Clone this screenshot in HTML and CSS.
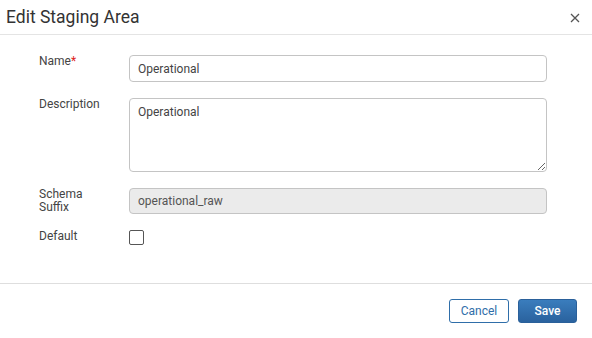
FILE: index.html
```html
<!DOCTYPE html>
<html lang="en">
<head>
  <meta charset="UTF-8">
  <title>Edit Staging Area</title>
  <link rel="stylesheet" href="styles.css">
</head>
<body>
  <div class="modal">
    <header class="modal-header">
      <h2>Edit Staging Area</h2>
      <button class="close" type="button" aria-label="Close">
        <svg width="10" height="10" viewBox="0 0 10 10"><path d="M1 1L9 9M9 1L1 9" stroke="#555" stroke-width="1.3"/></svg>
      </button>
    </header>
    <form class="modal-body">
      <label class="lbl">Name<span class="req">*</span></label>
      <input type="text" class="field" value="Operational">

      <label class="lbl">Description</label>
      <textarea class="field area">Operational</textarea>

      <label class="lbl">Schema<br>Suffix</label>
      <input type="text" class="field disabled" value="operational_raw" disabled>

      <label class="lbl">Default</label>
      <div class="check-wrap"><input type="checkbox" class="check"></div>
    </form>
    <footer class="modal-footer">
      <button type="button" class="btn cancel">Cancel</button>
      <button type="button" class="btn save">Save</button>
    </footer>
  </div>
</body>
</html>
```

FILE: styles.css
```css
body {
  margin: 0;
  font-family: Roboto, "Liberation Sans", sans-serif;
  background: #fff;
  color: #333;
  width: 592px;
  height: 338px;
  overflow: hidden;
}
.modal-header {
  height: 34px;
  border-bottom: 1px solid #e4e4e4;
  display: flex;
  align-items: center;
  justify-content: space-between;
  padding: 0 12px 0 6px;
}
.modal-header h2 {
  margin: 0;
  font-size: 17.5px;
  font-weight: 400;
  color: #333;
}
.close {
  border: none;
  background: none;
  padding: 0;
  display: flex;
  margin-top: 2px;
}
.modal-body {
  display: grid;
  grid-template-columns: 90px 418px;
  row-gap: 16px;
  padding: 20px 0 38px 39px;
  border-bottom: 1px solid #dedede;
}
.lbl {
  font-size: 12px;
  color: #444;
  line-height: 13px;
}
.req {
  color: #d22;
}
.field {
  display: block;
  box-sizing: border-box;
  width: 418px;
  height: 27px;
  margin: 0;
  border: 1px solid #c4c4c4;
  border-radius: 4px;
  padding: 0 8px;
  font-family: inherit;
  font-size: 12px;
  color: #444;
  background: #fff;
}
.area {
  height: 74px;
  padding-top: 6px;
  resize: vertical;
}
.disabled {
  height: 26px;
  background: #ebebeb;
  color: #555;
}
.check-wrap {
  display: flex;
}
.check {
  appearance: none;
  margin: 0;
  width: 15px;
  height: 15px;
  border: 1px solid #555;
  border-radius: 2px;
  background: #fff;
}
.modal-footer {
  display: flex;
  justify-content: flex-end;
  gap: 9px;
  padding: 15px 15px 0 0;
}
.btn {
  height: 24px;
  border-radius: 3px;
  font-family: inherit;
  font-size: 12px;
  cursor: pointer;
}
.cancel {
  width: 60px;
  background: #fff;
  border: 1px solid #2f6ea9;
  color: #2f6ea9;
}
.save {
  width: 59px;
  border: 1px solid #2a609a;
  background: linear-gradient(#3a7dbd, #2a629e);
  color: #fff;
  font-weight: 500;
}
```
